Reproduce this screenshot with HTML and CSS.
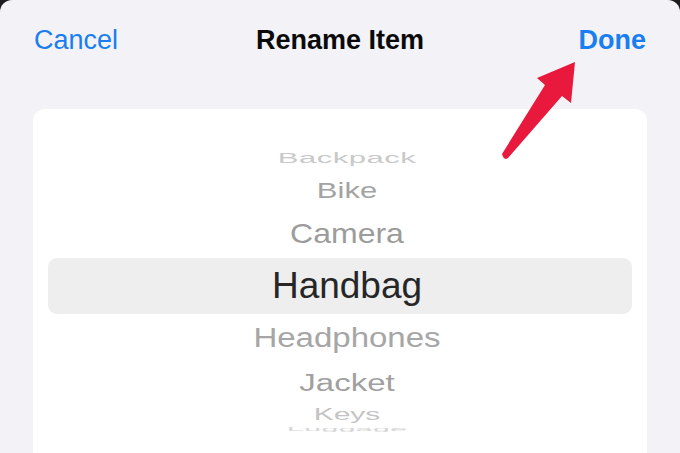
FILE: index.html
```html
<!DOCTYPE html>
<html lang="en">
<head>
  <meta charset="UTF-8">
  <meta name="viewport" content="width=device-width, initial-scale=1.0">
  <title>Rename Item</title>
  <link rel="stylesheet" href="styles.css">
</head>
<body>

  <div class="sheet">
    <!-- Navigation bar -->
    <div class="nav-bar">
      <button class="nav-btn cancel">Cancel</button>
      <div class="nav-title">Rename Item</div>
      <button class="nav-btn done">Done</button>
    </div>

    <!-- Name picker wheel -->
    <div class="picker-card">
      <div class="wheel">
        <div class="wheel-row row-backpack"><span>Backpack</span></div>
        <div class="wheel-row row-bike"><span>Bike</span></div>
        <div class="wheel-row row-camera"><span>Camera</span></div>
        <div class="wheel-row row-selected"><span>Handbag</span></div>
        <div class="wheel-row row-headphones"><span>Headphones</span></div>
        <div class="wheel-row row-jacket"><span>Jacket</span></div>
        <div class="wheel-row row-keys"><span>Keys</span></div>
        <div class="wheel-row row-luggage"><span>Luggage</span></div>
      </div>
    </div>

    <!-- Pointer arrow at Done -->
    <svg class="pointer" width="680" height="453" viewBox="0 0 680 453">
      <path d="M502 154 L545 85 L537 78 L575 62 L571 103 L562 96 L508 158 Q504 161 502 154 Z" fill="#e8193d"/>
    </svg>
  </div>

</body>
</html>
```

FILE: styles.css
```css
body {
  margin: 0;
  background-color: #1c1c1e;
  font-family: "Liberation Sans", Arial, sans-serif;
}

.sheet {
  position: relative;
  height: 453px;
  background-color: #f2f2f7;
  border-radius: 12px 12px 0 0;
  display: flex;
  flex-direction: column;
  overflow: hidden;
}

.nav-bar {
  display: grid;
  grid-template-columns: 1fr auto 1fr;
  align-items: center;
  height: 80px;
  padding: 0 34px 0 34px;
}

.nav-btn {
  background: none;
  border: none;
  padding: 0;
  font-family: inherit;
  font-size: 27px;
  color: #1a7ef0;
  cursor: pointer;
}

.cancel {
  justify-self: start;
}

.done {
  justify-self: end;
  font-weight: bold;
}

.nav-title {
  font-size: 27px;
  font-weight: bold;
  color: #0a0a0a;
}

.picker-card {
  flex: 1;
  margin: 29px 33px 0;
  padding: 35px 15px 0;
  background-color: #fff;
  border-radius: 12px 12px 0 0;
}

.wheel {
  display: flex;
  flex-direction: column;
}

.wheel-row {
  display: flex;
  justify-content: center;
  align-items: center;
  padding-left: 14px;
}

.wheel-row span {
  display: block;
}

.row-backpack {
  height: 28px;
  font-size: 31px;
  letter-spacing: 0.5px;
  color: #c9c9c9;
}
.row-backpack span { transform: scaleY(0.5); }

.row-bike {
  height: 38px;
  font-size: 31px;
  color: #a3a3a3;
}
.row-bike span { transform: scaleY(0.74); }

.row-camera {
  height: 48px;
  font-size: 32px;
  color: #9c9c9c;
}
.row-camera span { transform: scaleY(0.85); }

.row-selected {
  height: 56px;
  font-size: 37px;
  color: #262626;
  background-color: #eeeeef;
  border-radius: 9px;
}

.row-headphones {
  height: 48px;
  font-size: 33px;
  color: #a6a6a6;
}
.row-headphones span { transform: scaleY(0.86); }

.row-jacket {
  height: 42px;
  font-size: 33px;
  color: #a0a0a0;
}
.row-jacket span { transform: scaleY(0.7); }

.row-keys {
  height: 20px;
  font-size: 30px;
  color: #c4c4c4;
}
.row-keys span { transform: scaleY(0.56); }

.row-luggage {
  height: 10px;
  font-size: 31px;
  color: #d6d6d6;
}
.row-luggage span { transform: scaleY(0.16); }

.pointer {
  position: absolute;
  top: 0;
  left: 0;
  pointer-events: none;
}
```
